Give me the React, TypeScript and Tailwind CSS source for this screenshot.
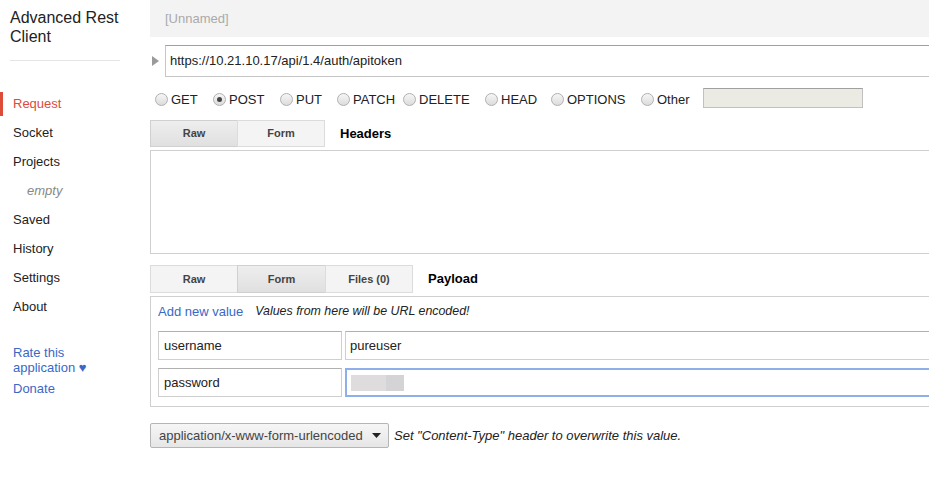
import React from "react";

const navItems2 = ["Saved", "History", "Settings", "About"];

function Radio({ label, checked, width }: { label: string; checked?: boolean; width: string }) {
  return (
    <label className={`flex items-center shrink-0 ${width}`}>
      <span className="relative w-[13px] h-[13px] rounded-full border border-[#b0b0b0] bg-gradient-to-b from-[#f6f6f6] to-[#dcdcdc] mr-[3px] flex items-center justify-center">
        {checked && <span className="w-[5px] h-[5px] rounded-full bg-[#444]" />}
      </span>
      <span className="text-[13px] text-[#222]">{label}</span>
    </label>
  );
}

function Tab({ label, active, w }: { label: string; active?: boolean; w: string }) {
  return (
    <div
      className={`${w} h-full flex items-center justify-center text-[11px] font-bold text-[#444] border -ml-px first:ml-0 ${
        active ? "bg-gradient-to-b from-[#eeeeee] to-[#e0e0e0] border-[#d0d0d0]" : "bg-[#f4f4f4] border-[#dcdcdc]"
      }`}
    >
      {label}
    </div>
  );
}

export default function App() {
  return (
    <div
      className="w-[929px] h-[478px] overflow-hidden flex bg-white text-[#222]"
      style={{ fontFamily: '"Liberation Sans", Arial, sans-serif' }}
    >
      {/* Sidebar */}
      <aside className="w-[150px] h-full shrink-0 flex flex-col bg-white">
        <div className="px-[10px] pt-[8px] text-[16px] leading-[19px] text-[#222]">
          Advanced Rest
          <br />
          Client
        </div>
        <div className="mx-[10px] mt-[14px] w-[110px] h-px bg-[#e5e5e5]" />
        <nav className="mt-[31px] flex flex-col gap-[5px] text-[13px]">
          <div className="h-[24px] flex items-center border-l-[3px] border-[#dd4b39] pl-[10px] text-[#dd4b39]">
            Request
          </div>
          <div className="h-[24px] flex items-center pl-[13px] text-[#222]">Socket</div>
          <div className="h-[24px] flex items-center pl-[13px] text-[#222]">Projects</div>
          <div className="h-[24px] flex items-center pl-[27px] italic text-[#888]">empty</div>
          {navItems2.map((n) => (
            <div key={n} className="h-[24px] flex items-center pl-[13px] text-[#222]">
              {n}
            </div>
          ))}
        </nav>
        <div className="mt-[26px] pl-[13px] text-[13px] leading-[15px] text-[#3a68c7]">
          <div>Rate this</div>
          <div>
            application <span className="text-[13px] font-bold">♥</span>
          </div>
          <div className="mt-[6px]">Donate</div>
        </div>
      </aside>

      {/* Main */}
      <main className="flex-1 h-full overflow-hidden bg-white">
        <div className="w-[791px] h-full flex flex-col bg-white">
          <div className="h-[37px] shrink-0 bg-[#f3f3f3] flex items-center pl-[15px] text-[13px] text-[#aaa]">
            [Unnamed]
          </div>

          <div className="mt-[8px] flex items-center">
            <div className="w-[15px] flex justify-start pl-[2px]">
              <svg width="7" height="10" viewBox="0 0 7 10">
                <path d="M0 0 L7 5 L0 10 Z" fill="#9a9a9a" />
              </svg>
            </div>
            <div className="flex-1 h-[32px] border border-[#c6c6c6] border-t-[#a0a0a0] bg-white flex items-center pl-[4px] text-[13px] text-[#222]">
              https://10.21.10.17/api/1.4/auth/apitoken
            </div>
          </div>

          <div className="mt-[11px] h-[20px] flex items-center pl-[5px] pt-[3px]">
            <Radio label="GET" width="w-[58px]" />
            <Radio label="POST" checked width="w-[67px]" />
            <Radio label="PUT" width="w-[57px]" />
            <Radio label="PATCH" width="w-[66px]" />
            <Radio label="DELETE" width="w-[82px]" />
            <Radio label="HEAD" width="w-[66px]" />
            <Radio label="OPTIONS" width="w-[90px]" />
            <Radio label="Other" width="w-[62px]" />
            <div className="w-[160px] h-[20px] -mt-[3px] border border-[#c0c0c0] border-t-[#a0a0a0] bg-[#ebebe4]" />
          </div>

          <div className="mt-[12px] h-[27px] flex items-center">
            <Tab label="Raw" active w="w-[88px]" />
            <Tab label="Form" w="w-[88px]" />
            <div className="ml-[15px] text-[13px] font-bold text-black">Headers</div>
          </div>

          <div className="mt-[3px] h-[104px] border border-[#cfcfcf] bg-white" />

          <div className="mt-[11px] h-[28px] flex items-center">
            <Tab label="Raw" w="w-[88px]" />
            <Tab label="Form" active w="w-[89px]" />
            <Tab label="Files (0)" w="w-[88px]" />
            <div className="ml-[15px] text-[13px] font-bold text-black">Payload</div>
          </div>

          <div className="mt-[3px] h-[111px] border border-[#cfcfcf] bg-white pl-[7px] pt-[7px]">
            <div className="flex items-center h-[15px]">
              <span className="text-[13px] text-[#3a68c7]">Add new value</span>
              <span className="ml-[12px] text-[12.4px] italic text-[#222]">Values from here will be URL encoded!</span>
            </div>
            <div className="mt-[12px] flex gap-[3px]">
              <div className="w-[184px] h-[29px] border border-[#cfcfcf] border-t-[#b0b0b0] flex items-center pl-[5px] text-[13px]">
                username
              </div>
              <div className="flex-1 h-[29px] border border-[#cfcfcf] border-t-[#b0b0b0] flex items-center pl-[4px] text-[13px]">
                pureuser
              </div>
            </div>
            <div className="mt-[8px] flex gap-[3px]">
              <div className="w-[184px] h-[29px] border border-[#cfcfcf] border-t-[#b0b0b0] flex items-center pl-[5px] text-[13px]">
                password
              </div>
              <div className="flex-1 h-[29px] border-2 border-[#8eb0ea] flex items-center pl-[4px]">
                <div className="w-[53px] h-[16px] flex">
                  <div className="w-[35px] h-full bg-[#dedcdc]" />
                  <div className="w-[18px] h-full bg-[#d4d4d6]" />
                </div>
              </div>
            </div>
          </div>

          <div className="mt-[16px] flex items-center">
            <div className="w-[239px] h-[25px] rounded-[2px] border border-[#b5b5b5] bg-gradient-to-b from-[#f6f6f6] to-[#e6e6e6] flex items-center pl-[8px] pr-[7px] text-[13px] text-[#444]">
              <span className="flex-1">application/x-www-form-urlencoded</span>
              <svg width="9" height="5" viewBox="0 0 9 5">
                <path d="M0 0 L9 0 L4.5 5 Z" fill="#222" />
              </svg>
            </div>
            <span className="ml-[5px] text-[13px] italic text-[#222]">Set "Content-Type" header to overwrite this value.</span>
          </div>
          <div className="flex-1 bg-white" />
        </div>
      </main>
    </div>
  );
}
